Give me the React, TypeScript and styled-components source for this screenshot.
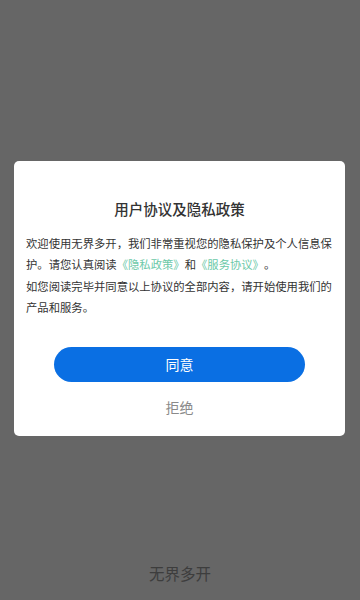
import React from "react";
import styled, { createGlobalStyle } from "styled-components";

const GlobalStyle = createGlobalStyle`
  html, body {
    margin: 0;
    padding: 0;
    height: 100%;
  }
  body {
    font-family: "Noto Sans CJK SC", "Noto Sans", sans-serif;
    background: #ffffff;
    text-spacing-trim: space-all;
    font-kerning: none;
  }
`;

const Page = styled.div`
  height: 600px;
  display: flex;
  flex-direction: column;
  justify-content: flex-end;
  align-items: center;
  background: #ffffff;
`;

const AppName = styled.div`
  font-size: 15.5px;
  line-height: 20px;
  color: #9a9a9a;
  padding-bottom: 17px;
`;

const Overlay = styled.div`
  position: fixed;
  inset: 0;
  background: rgba(0, 0, 0, 0.6);
  display: flex;
  align-items: center;
  justify-content: center;
`;

const Card = styled.div`
  width: 331px;
  margin: 0 0 4px -1px;
  background: #ffffff;
  border-radius: 5px;
  padding: 38px 12px 19px;
  box-sizing: border-box;
  display: flex;
  flex-direction: column;
`;

const Title = styled.h2`
  margin: 0;
  font-size: 14.5px;
  line-height: 20px;
  font-weight: 500;
  color: #333333;
  text-align: center;
`;

const Body = styled.p`
  margin: 14px 0 0;
  font-size: 11.33px;
  line-height: 21.5px;
  color: #333333;
  text-spacing-trim: space-all;
  font-kerning: none;
  font-feature-settings: "kern" 0, "palt" 0, "halt" 0;
`;

const Link = styled.span`
  color: #6cc9a8;
`;

const Actions = styled.div`
  margin-top: 28px;
  display: flex;
  flex-direction: column;
  align-items: center;
  gap: 15px;
`;

const Button = styled.button<{ $primary?: boolean }>`
  font-family: inherit;
  border: none;
  cursor: pointer;
  font-size: 14px;
  line-height: 20px;
  padding: 0;
  width: ${(p) => (p.$primary ? "251px" : "auto")};
  height: ${(p) => (p.$primary ? "35px" : "20px")};
  border-radius: 18px;
  background: ${(p) => (p.$primary ? "#0a6fe3" : "transparent")};
  color: ${(p) => (p.$primary ? "#ffffff" : "#8a8a8a")};
`;

export default function App() {
  return (
    <>
      <GlobalStyle />
      <Page>
        <AppName>无界多开</AppName>
      </Page>
      <Overlay>
        <Card>
          <Title>用户协议及隐私政策</Title>
          <Body>
            欢迎使用无界多开，我们非常重视您的隐私保护及个人信息保护。请您认真阅读
            <Link>《隐私政策》</Link>和<Link>《服务协议》</Link>。
            <br />
            如您阅读完毕并同意以上协议的全部内容，请开始使用我们的产品和服务。
          </Body>
          <Actions>
            <Button $primary>同意</Button>
            <Button>拒绝</Button>
          </Actions>
        </Card>
      </Overlay>
    </>
  );
}
